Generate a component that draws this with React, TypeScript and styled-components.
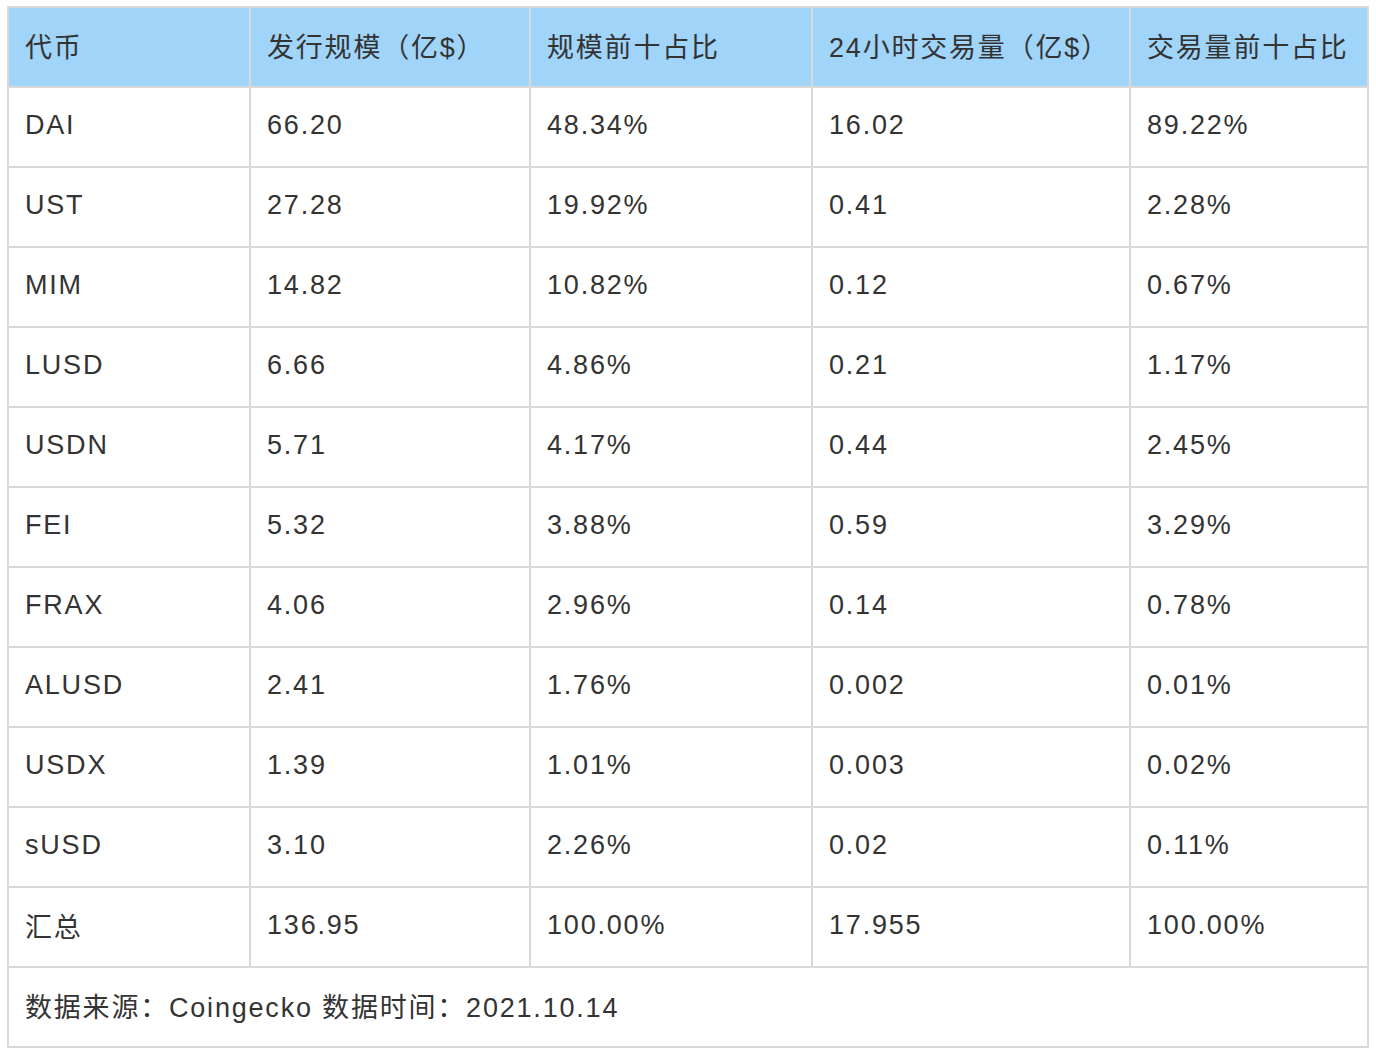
import React from 'react'
import styled, { createGlobalStyle } from 'styled-components';

const GlobalStyle = createGlobalStyle`
  html, body {
    margin: 0;
    padding: 0;
    background: #ffffff;
  }
  body {
    font-family: "Liberation Sans", "Noto Sans CJK SC", sans-serif;
    color: #333333;
  }
`

const headers = ['代币', '发行规模（亿$）', '规模前十占比', '24小时交易量（亿$）', '交易量前十占比']

const rows = [
  ['DAI', '66.20', '48.34%', '16.02', '89.22%'],
  ['UST', '27.28', '19.92%', '0.41', '2.28%'],
  ['MIM', '14.82', '10.82%', '0.12', '0.67%'],
  ['LUSD', '6.66', '4.86%', '0.21', '1.17%'],
  ['USDN', '5.71', '4.17%', '0.44', '2.45%'],
  ['FEI', '5.32', '3.88%', '0.59', '3.29%'],
  ['FRAX', '4.06', '2.96%', '0.14', '0.78%'],
  ['ALUSD', '2.41', '1.76%', '0.002', '0.01%'],
  ['USDX', '1.39', '1.01%', '0.003', '0.02%'],
  ['sUSD', '3.10', '2.26%', '0.02', '0.11%'],
  ['汇总', '136.95', '100.00%', '17.955', '100.00%'],
]

const widths = [242, 280, 282, 318, 238]

const App = () => {
  return (
    <Page>
      <GlobalStyle />
      <Table>
        <colgroup>
          {widths.map((w, i) => <col key={i} style={{ width: w }} />)}
        </colgroup>
        <thead>
          <tr>
            {headers.map(h => <HeadCell key={h}>{h}</HeadCell>)}
          </tr>
        </thead>
        <tbody>
          {rows.map(r => (
            <tr key={r[0]}>
              {r.map((c, i) => <Cell key={i}>{c}</Cell>)}
            </tr>
          ))}
          <tr>
            <Cell colSpan={5}>数据来源：Coingecko 数据时间：2021.10.14</Cell>
          </tr>
        </tbody>
      </Table>
    </Page>
  )
}

export default App;

const Page = styled.div`
  padding: 6px 0 0 7px;
`

const Table = styled.table`
  border-collapse: collapse;
  table-layout: fixed;
  width: 1362px;
  border: 2px solid #d9d9d9;
`

const Cell = styled.td`
  height: 80px;
  padding: 0 0 3px 16px;
  border: 2px solid #d9d9d9;
  font-size: 27px;
  letter-spacing: 1.8px;
  color: #333333;
  vertical-align: middle;
  white-space: nowrap;
  box-sizing: border-box;
`

const HeadCell = styled(Cell).attrs({ as: 'th' })`
  background: #a0d4f9;
  font-weight: normal;
  text-align: left;
`
